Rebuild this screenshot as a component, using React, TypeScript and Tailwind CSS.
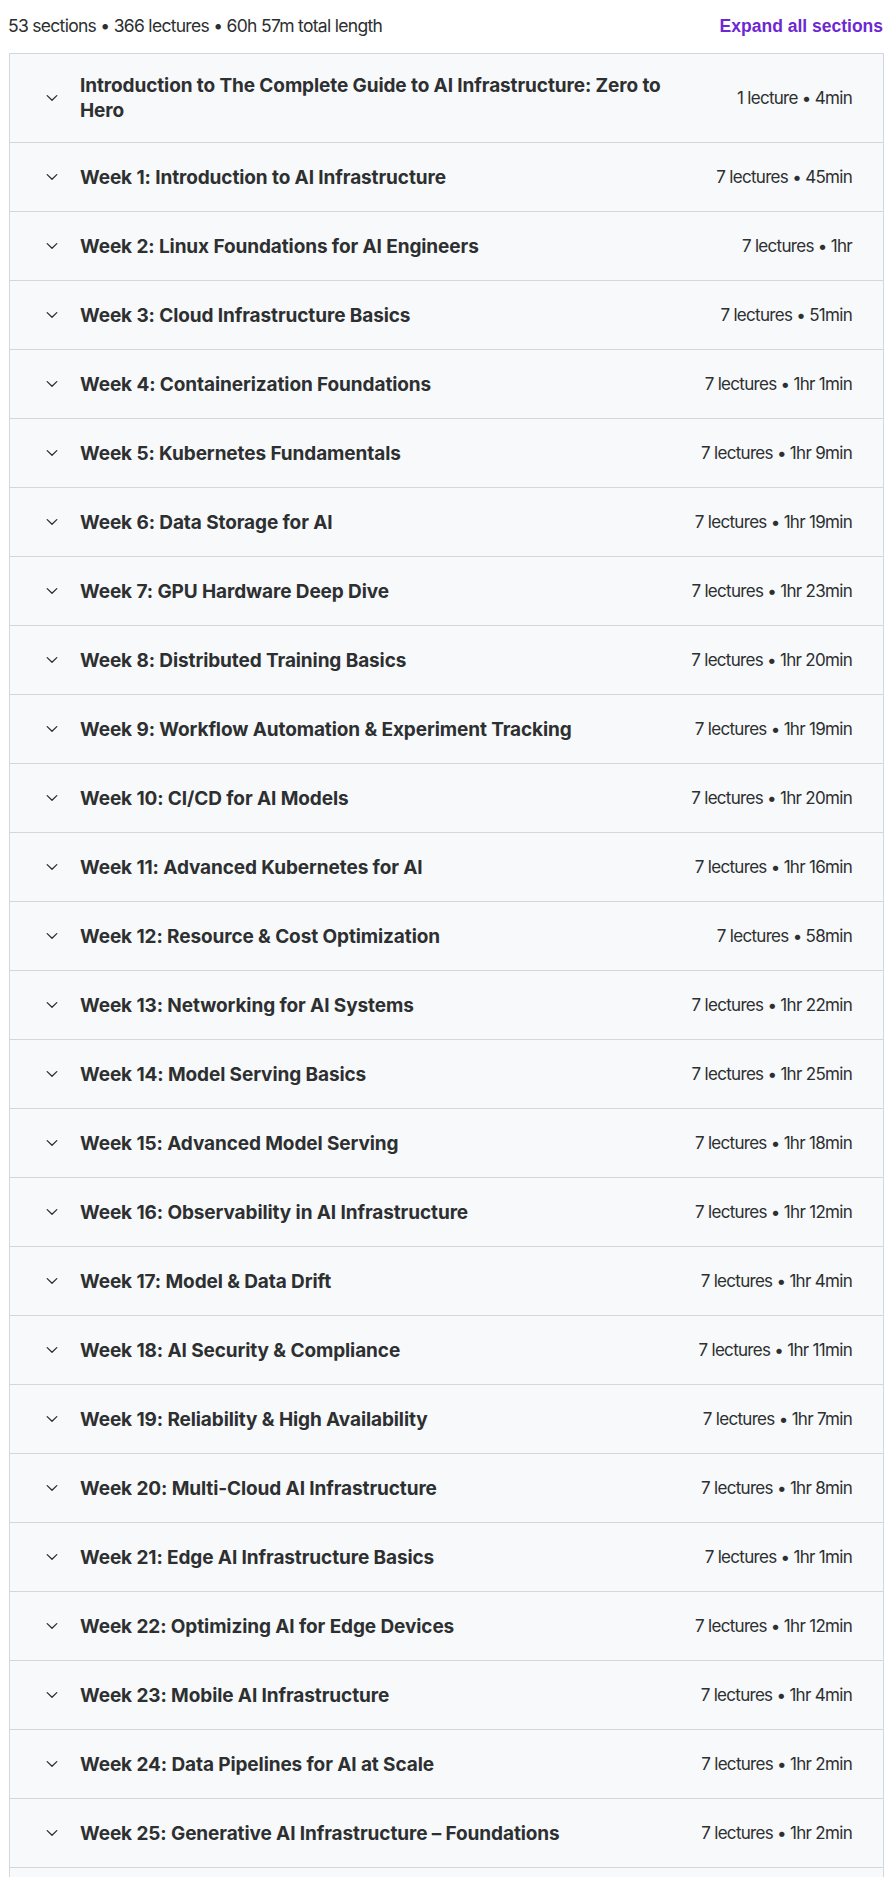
import React from "react";

type Section = { title: string; meta: string };

const sections: Section[] = [
  { title: "Introduction to The Complete Guide to AI Infrastructure: Zero to Hero", meta: "1 lecture • 4min" },
  { title: "Week 1: Introduction to AI Infrastructure", meta: "7 lectures • 45min" },
  { title: "Week 2: Linux Foundations for AI Engineers", meta: "7 lectures • 1hr" },
  { title: "Week 3: Cloud Infrastructure Basics", meta: "7 lectures • 51min" },
  { title: "Week 4: Containerization Foundations", meta: "7 lectures • 1hr 1min" },
  { title: "Week 5: Kubernetes Fundamentals", meta: "7 lectures • 1hr 9min" },
  { title: "Week 6: Data Storage for AI", meta: "7 lectures • 1hr 19min" },
  { title: "Week 7: GPU Hardware Deep Dive", meta: "7 lectures • 1hr 23min" },
  { title: "Week 8: Distributed Training Basics", meta: "7 lectures • 1hr 20min" },
  { title: "Week 9: Workflow Automation & Experiment Tracking", meta: "7 lectures • 1hr 19min" },
  { title: "Week 10: CI/CD for AI Models", meta: "7 lectures • 1hr 20min" },
  { title: "Week 11: Advanced Kubernetes for AI", meta: "7 lectures • 1hr 16min" },
  { title: "Week 12: Resource & Cost Optimization", meta: "7 lectures • 58min" },
  { title: "Week 13: Networking for AI Systems", meta: "7 lectures • 1hr 22min" },
  { title: "Week 14: Model Serving Basics", meta: "7 lectures • 1hr 25min" },
  { title: "Week 15: Advanced Model Serving", meta: "7 lectures • 1hr 18min" },
  { title: "Week 16: Observability in AI Infrastructure", meta: "7 lectures • 1hr 12min" },
  { title: "Week 17: Model & Data Drift", meta: "7 lectures • 1hr 4min" },
  { title: "Week 18: AI Security & Compliance", meta: "7 lectures • 1hr 11min" },
  { title: "Week 19: Reliability & High Availability", meta: "7 lectures • 1hr 7min" },
  { title: "Week 20: Multi-Cloud AI Infrastructure", meta: "7 lectures • 1hr 8min" },
  { title: "Week 21: Edge AI Infrastructure Basics", meta: "7 lectures • 1hr 1min" },
  { title: "Week 22: Optimizing AI for Edge Devices", meta: "7 lectures • 1hr 12min" },
  { title: "Week 23: Mobile AI Infrastructure", meta: "7 lectures • 1hr 4min" },
  { title: "Week 24: Data Pipelines for AI at Scale", meta: "7 lectures • 1hr 2min" },
  { title: "Week 25: Generative AI Infrastructure – Foundations", meta: "7 lectures • 1hr 2min" },
];

function Chevron() {
  return (
    <svg width="12" height="8" viewBox="0 0 12 8" fill="none" className="shrink-0">
      <path d="M1.2 1.6 L6 6.2 L10.8 1.6" stroke="#2d2f31" strokeWidth="1.3" strokeLinecap="round" strokeLinejoin="round" />
    </svg>
  );
}

function SectionRow({ s, first }: { s: Section; first: boolean }) {
  return (
    <div
      className={`flex items-center min-h-[69px] py-[19px] pl-[36px] pr-[31px] bg-[#f7f9fa] ${
        first ? "" : "border-t border-[#d1d7dc]"
      }`}
    >
      <div className="w-[34px] flex items-center">
        <Chevron />
      </div>
      <div className="flex-1 pr-[60px] text-[19px] leading-[25px] font-bold text-[#2d2f31] [font-family:Inter,sans-serif] tracking-[-0.1px]">
        {s.title}
      </div>
      <div className="shrink-0 text-[17px] leading-[25px] text-[#2d2f31] [font-family:Inter,sans-serif] tracking-[-0.7px]">
        {s.meta}
      </div>
    </div>
  );
}

export default function App() {
  return (
    <div className="w-[894px] h-[1877px] overflow-hidden bg-white">
      <div className="flex items-center justify-between pl-[8px] pr-[11px] h-[53px]">
        <span className="text-[17.5px] text-[#2d2f31] [font-family:Inter,sans-serif] tracking-[-0.7px]">
          53 sections • 366 lectures • 60h 57m total length
        </span>
        <button className="text-[17.5px] font-bold text-[#6d28d2] [font-family:'Liberation_Sans',Arial,sans-serif]">
          Expand all sections
        </button>
      </div>
      <div className="ml-[9px] w-[875px] border border-[#d1d7dc]">
        {sections.map((s, i) => (
          <SectionRow key={s.title} s={s} first={i === 0} />
        ))}
        <div className="h-[69px] border-t border-[#d1d7dc] bg-[#f7f9fa]" />
      </div>
    </div>
  );
}
